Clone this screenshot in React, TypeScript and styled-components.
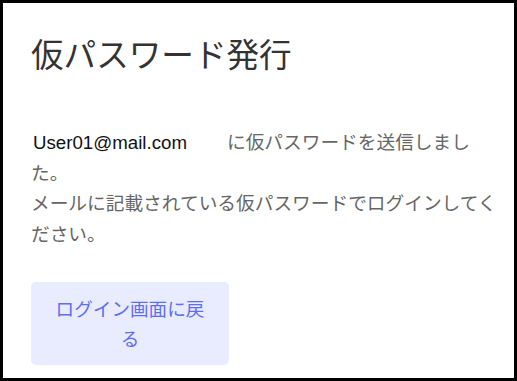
import React from 'react';
import styled, { createGlobalStyle } from 'styled-components';

const GlobalStyle = createGlobalStyle`
  html, body {
    margin: 0;
    padding: 0;
    background: #fff;
  }
  body {
    font-family: "Noto Sans CJK JP", "Noto Sans", sans-serif;
  }
`;

const Card = styled.div`
  box-sizing: border-box;
  width: 517px;
  height: 381px;
  border: 3px solid #000;
  background: #fff;
  padding: 30px 12px 0 28px;
  display: flex;
  flex-direction: column;
  align-items: flex-start;
`;

const Title = styled.h1`
  margin: 0;
  font-size: 32.6px;
  line-height: 40px;
  font-weight: 400;
  color: #333;
`;

const Message = styled.p`
  margin: 53px 0 0;
  font-size: 18.7px;
  line-height: 30.5px;
  color: #666;
`;

const Email = styled.span`
  display: inline-block;
  box-sizing: border-box;
  width: 191px;
  margin-right: 5px;
  padding-left: 2px;
  background: #fff;
  color: #111;
  font-family: "Liberation Sans", Arial, sans-serif;
  font-size: 18.7px;
  line-height: 22px;
  vertical-align: baseline;
`;

const BackButton = styled.button`
  margin-top: 34px;
  box-sizing: border-box;
  width: 198px;
  padding: 11px 19px 12px;
  border: none;
  border-radius: 5px;
  background: #e8ecfe;
  color: #5f6ef2;
  font-family: "Noto Sans CJK JP", "Noto Sans", sans-serif;
  font-size: 18.6px;
  line-height: 30px;
  text-align: center;
  cursor: pointer;
`;

export default function App() {
  return (
    <>
      <GlobalStyle />
      <Card>
        <Title>仮パスワード発行</Title>
        <Message>
          <Email>User01@mail.com</Email>に仮パスワードを送信しました。
          <br />
          メールに記載されている仮パスワードでログインしてください。
        </Message>
        <BackButton>ログイン画面に戻る</BackButton>
      </Card>
    </>
  );
}
